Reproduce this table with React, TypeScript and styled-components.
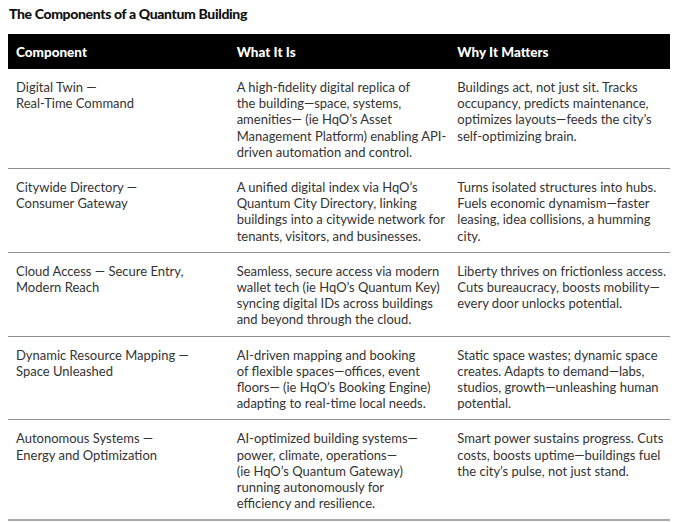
import React from "react";
import styled, { createGlobalStyle } from "styled-components";

const Global = createGlobalStyle`
  html, body { margin: 0; padding: 0; background: #ffffff; }
  body { font-family: "Lato", "Noto Sans", sans-serif; color: #2b2b2b; }
`;

const Page = styled.div`
  padding: 5px 10px 0 8px;
  width: 662px;
`;

const Title = styled.h1`
  margin: 0 0 0 1px;
  font-size: 14px;
  line-height: 18px;
  font-weight: 900;
  color: #111;
  letter-spacing: -0.35px;
`;

const Table = styled.table`
  margin-top: 11px;
  width: 662px;
  border-collapse: collapse;
  table-layout: fixed;
  border-bottom: 2px solid #a8a8a8;
`;

const HeadRow = styled.tr`
  background: #000;
  height: 35px;
`;

const HeadCell = styled.th`
  text-align: left;
  color: #fff;
  font-size: 13.5px;
  font-weight: 900;
  padding: 0 8px;
  line-height: 16px;
`;

const Row = styled.tr<{ $last?: boolean }>`
  border-bottom: ${(p) => (p.$last ? "none" : "1px solid #8f8f8f")};
`;

const Cell = styled.td`
  vertical-align: top;
  padding: 10px 8px 8px 8px;
  font-size: 13px;
  line-height: 16.2px;
  color: #333;
  white-space: nowrap;
`;

const rows: string[][][] = [
  [
    ["Digital Twin —", "Real-Time Command"],
    [
      "A high-fidelity digital replica of",
      "the building—space, systems,",
      "amenities— (ie HqO’s Asset",
      "Management Platform) enabling API-",
      "driven automation and control.",
    ],
    [
      "Buildings act, not just sit. Tracks",
      "occupancy, predicts maintenance,",
      "optimizes layouts—feeds the city’s",
      "self-optimizing brain.",
    ],
  ],
  [
    ["Citywide Directory —", "Consumer Gateway"],
    [
      "A unified digital index via HqO’s",
      "Quantum City Directory, linking",
      "buildings into a citywide network for",
      "tenants, visitors, and businesses.",
    ],
    [
      "Turns isolated structures into hubs.",
      "Fuels economic dynamism—faster",
      "leasing, idea collisions, a humming",
      "city.",
    ],
  ],
  [
    ["Cloud Access — Secure Entry,", "Modern Reach"],
    [
      "Seamless, secure access via modern",
      "wallet tech (ie HqO’s Quantum Key)",
      "syncing digital IDs across buildings",
      "and beyond through the cloud.",
    ],
    [
      "Liberty thrives on frictionless access.",
      "Cuts bureaucracy, boosts mobility—",
      "every door unlocks potential.",
    ],
  ],
  [
    ["Dynamic Resource Mapping —", "Space Unleashed"],
    [
      "AI-driven mapping and booking",
      "of flexible spaces—offices, event",
      "floors— (ie HqO’s Booking Engine)",
      "adapting to real-time local needs.",
    ],
    [
      "Static space wastes; dynamic space",
      "creates. Adapts to demand—labs,",
      "studios, growth—unleashing human",
      "potential.",
    ],
  ],
  [
    ["Autonomous Systems —", "Energy and Optimization"],
    [
      "AI-optimized building systems—",
      "power, climate, operations—",
      "(ie HqO’s Quantum Gateway)",
      "running autonomously for",
      "efficiency and resilience.",
    ],
    [
      "Smart power sustains progress. Cuts",
      "costs, boosts uptime—buildings fuel",
      "the city’s pulse, not just stand.",
    ],
  ],
];

const Lines = ({ lines }: { lines: string[] }) => (
  <>
    {lines.map((l, i) => (
      <React.Fragment key={i}>
        {l}
        {i < lines.length - 1 && <br />}
      </React.Fragment>
    ))}
  </>
);

export default function App() {
  return (
    <>
      <Global />
      <Page>
        <Title>The Components of a Quantum Building</Title>
        <Table>
          <thead>
            <HeadRow>
              <HeadCell>Component</HeadCell>
              <HeadCell>What It Is</HeadCell>
              <HeadCell>Why It Matters</HeadCell>
            </HeadRow>
          </thead>
          <tbody>
            {rows.map((r, i) => (
              <Row key={i} $last={i === rows.length - 1}>
                {r.map((c, j) => (
                  <Cell key={j}>
                    <Lines lines={c} />
                  </Cell>
                ))}
              </Row>
            ))}
          </tbody>
        </Table>
      </Page>
    </>
  );
}
